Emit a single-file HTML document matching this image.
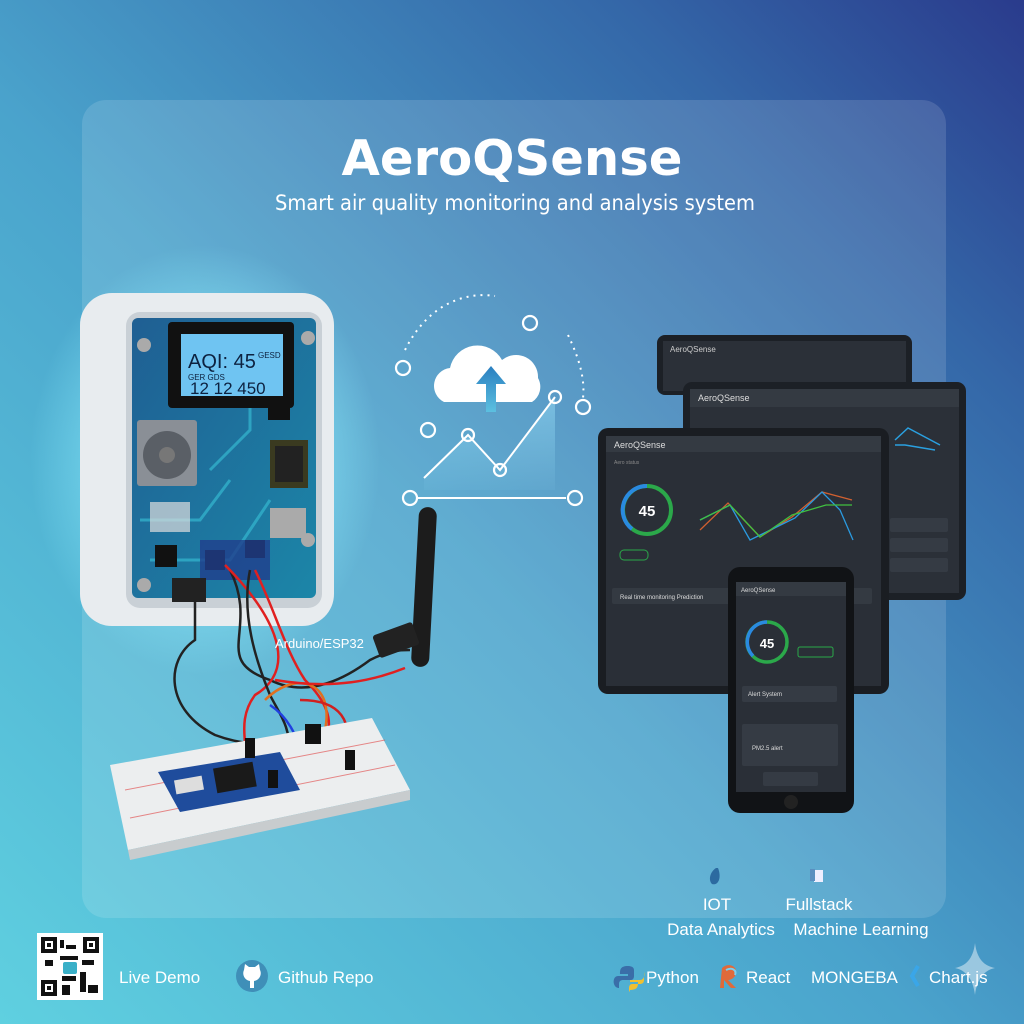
<!DOCTYPE html>
<html><head><meta charset="utf-8"><style>
html,body{margin:0;padding:0;width:1024px;height:1024px;overflow:hidden}
svg{display:block}
text{font-family:"Liberation Sans",sans-serif}
</style></head><body>
<svg width="1024" height="1024" viewBox="0 0 1024 1024" xmlns="http://www.w3.org/2000/svg">
<defs>
<linearGradient id="bg" x1="0" y1="1" x2="1" y2="0">
<stop offset="0" stop-color="#5fd0e0"/><stop offset="0.45" stop-color="#4aa3cc"/><stop offset="0.8" stop-color="#3467a8"/><stop offset="1" stop-color="#2a3b8c"/>
</linearGradient>
<radialGradient id="glow" cx="0.5" cy="0.5" r="0.5"><stop offset="0" stop-color="#9ff4ff" stop-opacity="1"/><stop offset="0.6" stop-color="#8ff0ff" stop-opacity="0.5"/><stop offset="1" stop-color="#8ff0ff" stop-opacity="0"/></radialGradient>
<linearGradient id="pcb" x1="0" y1="0" x2="1" y2="1"><stop offset="0" stop-color="#1f5f93"/><stop offset="1" stop-color="#1c86a8"/></linearGradient>
<linearGradient id="chf" x1="0" y1="0" x2="0" y2="1"><stop offset="0" stop-color="#9fe8ff" stop-opacity="0.45"/><stop offset="1" stop-color="#9fe8ff" stop-opacity="0.05"/></linearGradient>
<linearGradient id="arr" x1="0" y1="0" x2="0" y2="1"><stop offset="0" stop-color="#2a7fc0"/><stop offset="1" stop-color="#5cc0e0"/></linearGradient>
</defs>
<rect width="1024" height="1024" fill="url(#bg)"/>
<rect x="82" y="100" width="864" height="818" rx="24" fill="#ffffff" fill-opacity="0.13"/>
<text x="512" y="175" text-anchor="middle" font-size="49" font-weight="bold" fill="#fff" textLength="341" lengthAdjust="spacingAndGlyphs" style="font-family:'DejaVu Sans','Liberation Sans',sans-serif">AeroQSense</text>
<text x="515" y="210" text-anchor="middle" font-size="21" fill="#fff" textLength="480" lengthAdjust="spacingAndGlyphs" style="font-family:'DejaVu Sans Condensed','Liberation Sans Narrow',sans-serif">Smart air quality monitoring and analysis system</text>

<ellipse cx="205" cy="460" rx="175" ry="215" fill="url(#glow)"/>
<rect x="80" y="293" width="254" height="333" rx="32" fill="#e8ecef"/>
<rect x="126" y="312" width="196" height="296" rx="14" fill="#c9d0d6"/>
<rect x="132" y="318" width="184" height="280" rx="6" fill="url(#pcb)"/>
<path d="M140 520 h60 l30 -40 M150 560 h80 l40 -60 M210 470 l40 -40 v-30" stroke="#35b8d0" stroke-width="3" fill="none" opacity="0.7"/>
<rect x="168" y="322" width="126" height="86" rx="4" fill="#111"/>
<rect x="181" y="334" width="102" height="62" fill="#6fc4f2"/>
<text x="188" y="368" font-size="20" fill="#0d2240" font-family="Liberation Mono">AQI: 45</text>
<text x="258" y="358" font-size="8" fill="#0d2240">GESD</text>
<text x="188" y="380" font-size="8" fill="#0d2240">GER  GDS</text>
<text x="190" y="394" font-size="17" fill="#0d2240">12 12 450</text>
<rect x="137" y="420" width="60" height="66" rx="3" fill="#8a8f96"/>
<circle cx="167" cy="455" r="24" fill="#5a5f66"/><circle cx="167" cy="455" r="8" fill="#777"/>
<rect x="270" y="440" width="38" height="48" fill="#3a3a20"/><rect x="275" y="446" width="28" height="36" fill="#222"/>
<rect x="268" y="400" width="22" height="20" fill="#111"/>
<rect x="270" y="508" width="36" height="30" fill="#aaa"/>
<rect x="150" y="502" width="40" height="30" fill="#ddd" opacity="0.7"/>
<rect x="155" y="545" width="22" height="22" fill="#111"/><rect x="205" y="550" width="20" height="20" fill="#111"/><rect x="245" y="540" width="20" height="18" fill="#111"/>
<rect x="200" y="540" width="70" height="40" fill="#213f8c" opacity="0.8"/>
<circle cx="144" cy="345" r="7" fill="#aaa"/><circle cx="308" cy="338" r="7" fill="#aaa"/><circle cx="144" cy="585" r="7" fill="#aaa"/><circle cx="308" cy="540" r="7" fill="#aaa"/>
<rect x="172" y="578" width="34" height="24" fill="#222"/>
<g fill="none" stroke-width="2.5">
<path d="M195 600 v40 c-30 20 -30 70 20 95 c40 15 80 10 120 0" stroke="#222"/>
<path d="M230 570 c30 60 -20 90 40 110 c40 20 80 -5 100 -20 c20 -10 30 -10 40 -10" stroke="#222"/>
<path d="M225 565 c40 40 80 100 30 130 c-15 20 -10 40 -10 50" stroke="#e02020"/>
<path d="M255 570 c20 40 30 80 50 110 c20 20 30 40 20 60" stroke="#e02020"/>
<path d="M250 570 c-10 50 10 100 20 125 c10 20 20 30 20 60" stroke="#222"/>
<path d="M265 700 c30 -30 70 -20 60 30 c-5 20 -5 30 -5 30" stroke="#e07020"/>
<path d="M275 680 c60 10 100 0 130 -12" stroke="#e02020"/>
<path d="M270 705 c15 10 30 30 30 55" stroke="#2040e0"/>
<path d="M300 700 c40 0 55 20 45 60" stroke="#d02020"/>
</g>
<text x="275" y="648" font-size="13" fill="#fff">Arduino/ESP32</text>
<rect x="415" y="507" width="18" height="160" rx="9" fill="#1c1c1c" transform="rotate(3 424 587)"/>
<rect x="375" y="628" width="42" height="24" rx="3" fill="#222" transform="rotate(-20 396 640)"/>
<path d="M110 765 L372 718 L410 790 L128 850 Z" fill="#eceeef"/>
<path d="M128 850 L410 790 L410 800 L130 860 Z" fill="#c8ccce"/>
<path d="M125 790 L385 740 M130 818 L395 765" stroke="#e04040" stroke-width="1" opacity="0.6"/>
<path d="M158 772 L280 752 L300 790 L180 812 Z" fill="#1f4c9c"/>
<rect x="215" y="765" width="40" height="25" fill="#1a1a1a" transform="rotate(-10 235 778)"/>
<rect x="175" y="778" width="28" height="14" fill="#ddd" transform="rotate(-10 189 785)"/>
<rect x="245" y="738" width="10" height="20" fill="#111"/><rect x="305" y="724" width="16" height="20" fill="#111"/><rect x="345" y="750" width="10" height="20" fill="#111"/><rect x="268" y="770" width="10" height="18" fill="#111"/>

<g fill="none" stroke="#fff" stroke-width="2">
<path d="M405 350 C430 300 470 292 495 296" stroke-dasharray="2 5"/>
<path d="M568 335 C580 360 585 380 583 398" stroke-dasharray="2 5"/>
<line x1="418" y1="498" x2="566" y2="498"/>
</g>
<path d="M424 478 L468 435 L500 470 L555 397 L555 490 L424 490 Z" fill="url(#chf)"/>
<polyline points="424,478 468,435 500,470 555,397" fill="none" stroke="#fff" stroke-width="2"/>
<g fill="none" stroke="#fff" stroke-width="2.2">
<circle cx="403" cy="368" r="7"/><circle cx="530" cy="323" r="7"/><circle cx="583" cy="407" r="7"/><circle cx="428" cy="430" r="7"/><circle cx="468" cy="435" r="6"/><circle cx="500" cy="470" r="6"/><circle cx="555" cy="397" r="6"/><circle cx="410" cy="498" r="7"/><circle cx="575" cy="498" r="7"/>
</g>
<path d="M444 402 a18 18 0 0 1 6 -34 a28 28 0 0 1 52 -8 a22 22 0 0 1 36 18 a18 18 0 0 1 -6 24 Z" fill="#fff"/>
<path d="M491 366 l-15 18 h10 v28 h10 v-28 h10 Z" fill="url(#arr)"/>

<rect x="657" y="335" width="255" height="60" rx="8" fill="#1c2026"/>
<rect x="663" y="341" width="243" height="50" fill="#2b3038"/>
<text x="670" y="352" font-size="8" fill="#ccc">AeroQSense</text>
<rect x="683" y="382" width="283" height="218" rx="9" fill="#1c2026"/>
<rect x="690" y="389" width="269" height="204" fill="#2b3038"/>
<rect x="690" y="389" width="269" height="18" fill="#343a42"/>
<text x="698" y="401" font-size="9" fill="#ddd">AeroQSense</text>
<polyline points="895,445 905,445 935,450" stroke="#2aa0e0" fill="none" stroke-width="1.5"/>
<polyline points="895,440 908,428 940,445" stroke="#2aa0e0" fill="none" stroke-width="1.5"/>
<rect x="890" y="518" width="58" height="14" rx="2" fill="#353b44"/><rect x="890" y="538" width="58" height="14" rx="2" fill="#353b44"/><rect x="890" y="558" width="58" height="14" rx="2" fill="#353b44"/>
<rect x="598" y="428" width="291" height="266" rx="10" fill="#1a1d22"/>
<rect x="606" y="436" width="275" height="250" fill="#2a2f37"/>
<rect x="606" y="436" width="275" height="16" fill="#343a42"/>
<text x="614" y="448" font-size="9" fill="#ddd">AeroQSense</text>
<text x="614" y="464" font-size="5" fill="#888">Aero status</text>
<circle cx="647" cy="510" r="24" fill="none" stroke="#2ba84a" stroke-width="4"/>
<path d="M647 486 a24 24 0 0 0 -15 43" fill="none" stroke="#2a8ae0" stroke-width="4"/>
<text x="647" y="516" text-anchor="middle" font-size="15" font-weight="bold" fill="#fff">45</text>
<rect x="620" y="550" width="28" height="10" rx="4" fill="none" stroke="#2ba84a"/>
<g fill="none" stroke-width="1.3">
<polyline points="700,530 728,503 760,537 792,517 822,492 852,500" stroke="#d06030"/>
<polyline points="700,520 730,505 750,540 795,518 822,492 840,510 853,540" stroke="#2a9ae0"/>
<polyline points="700,520 730,505 760,537 792,515 826,505 852,505" stroke="#40c040"/>
</g>
<rect x="612" y="588" width="260" height="16" rx="2" fill="#343a42"/>
<text x="620" y="599" font-size="6" fill="#ddd">Real time monitoring    Prediction</text>
<rect x="728" y="567" width="126" height="246" rx="12" fill="#111316"/>
<rect x="736" y="582" width="110" height="210" fill="#2a2f37"/>
<rect x="736" y="582" width="110" height="14" fill="#343a42"/>
<text x="741" y="592" font-size="6" fill="#ddd">AeroQSense</text>
<circle cx="767" cy="642" r="20" fill="none" stroke="#2ba84a" stroke-width="3.5"/>
<path d="M767 622 a20 20 0 0 0 -14 34" fill="none" stroke="#2a8ae0" stroke-width="3.5"/>
<text x="767" y="648" text-anchor="middle" font-size="13" font-weight="bold" fill="#fff">45</text>
<rect x="798" y="647" width="35" height="10" rx="2" fill="none" stroke="#2ba84a"/>
<rect x="742" y="686" width="95" height="16" rx="2" fill="#353b44"/>
<text x="748" y="696" font-size="6" fill="#ddd">Alert System</text>
<rect x="742" y="724" width="96" height="42" rx="2" fill="#353b44"/>
<text x="752" y="750" font-size="6" fill="#ddd">PM2.5 alert</text>
<rect x="763" y="772" width="55" height="14" rx="2" fill="#353b44"/>
<circle cx="791" cy="802" r="7" fill="#222"/>

<path d="M716 868 c-6 4 -8 12 -4 16 c6 2 10 -6 6 -16 Z" fill="#2c6aa0"/>
<rect x="814" y="870" width="9" height="12" fill="#eef" /><rect x="810" y="869" width="5" height="12" fill="#5a8fc0"/>
<g fill="#fff" font-size="17" style="font-family:'DejaVu Sans Condensed','Liberation Sans',sans-serif">
<text x="717" y="910" text-anchor="middle">IOT</text>
<text x="819" y="910" text-anchor="middle">Fullstack</text>
<text x="721" y="935" text-anchor="middle">Data Analytics</text>
<text x="861" y="935" text-anchor="middle">Machine Learning</text>
</g>
<rect x="37" y="933" width="66" height="67" fill="#fff"/>
<g fill="#111">
<rect x="41" y="937" width="16" height="16"/><rect x="83" y="937" width="16" height="16"/><rect x="41" y="980" width="16" height="16"/>
<rect x="60" y="940" width="4" height="8"/><rect x="66" y="945" width="10" height="4"/><rect x="60" y="956" width="18" height="4"/><rect x="45" y="960" width="8" height="6"/><rect x="82" y="960" width="12" height="5"/><rect x="62" y="976" width="14" height="5"/><rect x="80" y="972" width="6" height="20"/><rect x="88" y="985" width="10" height="8"/><rect x="62" y="985" width="8" height="10"/>
</g>
<rect x="45" y="941" width="8" height="8" fill="#fff"/><rect x="87" y="941" width="8" height="8" fill="#fff"/><rect x="45" y="984" width="8" height="8" fill="#fff"/>
<rect x="47" y="943" width="4" height="4" fill="#111"/><rect x="89" y="943" width="4" height="4" fill="#111"/><rect x="47" y="986" width="4" height="4" fill="#111"/>
<rect x="63" y="962" width="14" height="12" rx="2" fill="#3ab0c8"/>
<g fill="#fff" font-size="17" style="font-family:'DejaVu Sans Condensed','Liberation Sans',sans-serif">
<text x="119" y="983">Live Demo</text>
<text x="278" y="983">Github Repo</text>
<text x="646" y="983">Python</text>
<text x="746" y="983">React</text>
<text x="811" y="983">MONGEBA</text>
<text x="929" y="983">Chart.js</text>
</g>
<circle cx="252" cy="976" r="16" fill="#3f8fb8"/>
<path d="M244 970 l1 -6 l4 3 h6 l4 -3 l1 6 c2 4 0 10 -6 11 v7 h-4 v-7 c-6 -1 -8 -7 -6 -11 Z" fill="#fff"/>
<path d="M628 966 c-8 0 -8 4 -8 8 h8 v2 h-10 c-4 0 -5 5 -4 8 c1 3 3 4 5 4 v-4 c0 -3 2 -4 4 -4 h8 c2 0 3 -2 3 -4 v-6 c0 -3 -3 -4 -6 -4 Z" fill="#3a6ea8"/>
<path d="M630 990 c8 0 8 -4 8 -8 h-8 v-2 h10 c4 0 5 -5 4 -8 v8 c0 3 -2 4 -4 4 h-8 c-2 0 -3 2 -3 4 v2 c0 2 0 3 1 0 Z" fill="#f0c030"/>
<path d="M722 968 c6 -6 16 -2 14 6 c-2 5 -6 6 -8 6 l8 8 h-5 l-7 -8 v8 h-4 Z" fill="#e06a3a"/>
<path d="M726 970 c6 -3 11 0 9 5" stroke="#7ad0f0" stroke-width="2" fill="none"/>
<path d="M918 966 l-6 10 l6 10" stroke="#3aa6e8" stroke-width="4" fill="none"/>
<path d="M975 943 C977 960 985 966 995 968 C985 970 977 978 975 995 C973 978 965 970 955 968 C965 966 973 960 975 943 Z" fill="#fff" fill-opacity="0.45"/>
</svg>
</body></html>
